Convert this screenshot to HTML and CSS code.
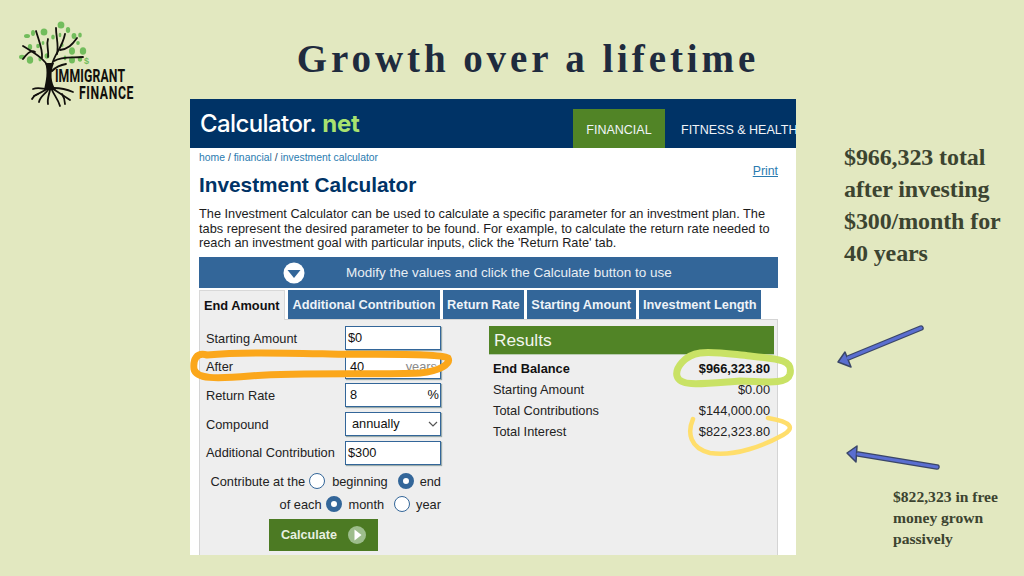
FILE: index.html
```html
<!DOCTYPE html>
<html lang="en">
<head>
<meta charset="utf-8">
<title>Growth over a lifetime</title>
<link rel="stylesheet" href="styles.css">
</head>
<body>
<div class="slide">
  <div class="logo">
    <svg class="tree" width="80" height="90" viewBox="0 0 80 90">
      <g class="leaves">
        <ellipse cx="43" cy="4" rx="3.4" ry="3.6"/><ellipse cx="26" cy="11" rx="3.4" ry="3.6"/><ellipse cx="50" cy="9" rx="2.2" ry="3"/>
        <ellipse cx="9" cy="15" rx="3" ry="2"/><ellipse cx="15" cy="12" rx="2" ry="3"/><ellipse cx="56" cy="15" rx="2.4" ry="3"/>
        <ellipse cx="62" cy="14" rx="1.8" ry="2.6"/><ellipse cx="12" cy="26" rx="2.2" ry="3"/><ellipse cx="65" cy="30" rx="3.2" ry="3.8"/>
        <ellipse cx="54" cy="30" rx="3" ry="3.8"/><ellipse cx="12" cy="39" rx="3.2" ry="3.8"/><ellipse cx="4" cy="36" rx="3" ry="2.2"/>
        <ellipse cx="54" cy="39" rx="3" ry="3.6"/><ellipse cx="62" cy="38" rx="2.2" ry="2.8"/><ellipse cx="29" cy="35" rx="2.4" ry="2.8"/>
        <ellipse cx="20" cy="25" rx="1.8" ry="2.2"/><ellipse cx="25" cy="22" rx="1.4" ry="2"/><ellipse cx="35" cy="16" rx="1.8" ry="2.6"/>
        <ellipse cx="42" cy="14" rx="1.4" ry="2.2"/><ellipse cx="60" cy="22" rx="1.8" ry="2"/><ellipse cx="47" cy="37" rx="1.4" ry="2.4"/>
        <ellipse cx="22" cy="38" rx="1.6" ry="2.4"/><ellipse cx="44" cy="24" rx="1.6" ry="2"/>
      </g>
      <g class="branches">
        <path d="M30 46 C27 38 16 32 5 25"/>
        <path d="M24 37 C25 29 21 20 18 10"/>
        <path d="M34 44 C36 33 44 28 47 13"/>
        <path d="M39 33 C41 24 38 16 38 7"/>
        <path d="M36 40 C44 35 54 37 65 36"/>
        <path d="M42 29 C50 28 54 24 59 17"/>
        <path d="M17 31 C13 28 8 34 5 38"/>
        <path d="M30 36 C31 28 28 24 30 18"/>
        <path d="M34 50 C38 46 42 44 48 43"/>
      </g>
      <path class="trunk" d="M27 42 C30 50 28 60 26 69 L38 69 C33 62 32 52 36 42 Z"/>
      <g class="roots">
        <path d="M30 68 C25 68 20 66 15 68"/>
        <path d="M29 68 C24 71 20 73 16 75"/>
        <path d="M30 69 C26 74 22 76 21 81"/>
        <path d="M32 69 C31 74 29 78 30 83"/>
        <path d="M34 69 C36 74 40 78 42 85"/>
        <path d="M35 68 C40 71 46 75 52 79"/>
        <path d="M36 67 C42 67 48 68 55 71"/>
        <path d="M44 73 C46 76 47 79 47 83"/>
        <path d="M20 73 C17 74 15 76 14 78"/>
      </g>
    </svg>
    <span class="logo-dollar">$</span>
    <div class="logo-name"><span>IMMIGRANT</span><span>FINANCE</span></div>
  </div>

  <h1 class="title">Growth over a lifetime</h1>

  <main class="calc">
    <header class="calc-top">
      <div class="brand"><span>Calculator</span><span class="brand-dot">.</span><span class="brand-net">net</span></div>
      <nav class="nav">
        <a class="nav-item nav-active">FINANCIAL</a>
        <a class="nav-item">FITNESS &amp; HEALTH</a>
      </nav>
    </header>
    <div class="calc-body">
      <div class="crumb-row">
        <div>
          <div class="crumbs"><a>home</a> / <a>financial</a> / <a>investment calculator</a></div>
          <h2 class="calc-title">Investment Calculator</h2>
        </div>
        <a class="print">Print</a>
      </div>
      <p class="intro">The Investment Calculator can be used to calculate a specific parameter for an investment plan. The tabs represent the desired parameter to be found. For example, to calculate the return rate needed to reach an investment goal with particular inputs, click the 'Return Rate' tab.</p>
      <div class="modify">
        <svg class="modify-icon" width="22" height="22" viewBox="0 0 22 22"><circle cx="11" cy="11" r="10.5" fill="#fff"/><path d="M4.5 8 H17.5 L11 16 Z" fill="#336699"/></svg>
        <span>Modify the values and click the Calculate button to use</span>
      </div>
      <div class="tabs">
        <div class="tab tab-on">End Amount</div>
        <div class="tab">Additional Contribution</div>
        <div class="tab">Return Rate</div>
        <div class="tab">Starting Amount</div>
        <div class="tab">Investment Length</div>
      </div>
      <div class="panel">
        <div class="form">
          <div class="field"><label>Starting Amount</label><div class="input">$0</div></div>
          <div class="field"><label>After</label><div class="input input-split"><span>40</span><span class="unit">years</span></div></div>
          <div class="field"><label>Return Rate</label><div class="input input-split"><span>8</span><span>%</span></div></div>
          <div class="field"><label>Compound</label><div class="input input-split"><span>annually</span>
            <svg width="10" height="6" viewBox="0 0 10 6"><path d="M1 1 L5 5 L9 1" fill="none" stroke="#555" stroke-width="1.2"/></svg></div></div>
          <div class="field"><label>Additional Contribution</label><div class="input">$300</div></div>
          <div class="radios r1"><span>Contribute at the</span><i class="radio"></i><span>beginning</span><i class="radio radio-on gap"></i><span>end</span></div>
          <div class="radios r2"><span>of each</span><i class="radio radio-on"></i><span>month</span><i class="radio gap"></i><span>year</span></div>
          <div class="calc-btn"><span>Calculate</span>
            <svg width="18" height="18" viewBox="0 0 18 18"><circle cx="9" cy="9" r="9" fill="#9dbd8c"/><path d="M6.5 3.5 L13.5 9 L6.5 14.5 Z" fill="#fff"/></svg>
          </div>
        </div>
        <div class="results">
          <div class="results-head">Results</div>
          <div class="row row-strong"><span>End Balance</span><span>$966,323.80</span></div>
          <div class="row"><span>Starting Amount</span><span>$0.00</span></div>
          <div class="row"><span>Total Contributions</span><span>$144,000.00</span></div>
          <div class="row"><span>Total Interest</span><span>$822,323.80</span></div>
        </div>
      </div>
    </div>
  </main>

  <svg class="marks" width="1024" height="576" viewBox="0 0 1024 576" aria-hidden="true">
    <path class="mark-orange" d="M207 355 C196 352 193 360 194 369 C196 379 215 379 250 376 C300 372 380 375 420 373 C440 371 451 364 448 358 C440 353 380 355 330 354 C280 353 240 352 207 355"/>
    <path class="mark-green" d="M700 353 C685 355 675 368 677 376 C680 387 700 384 740 381 C760 381 787 386 790 374 C793 360 780 359 750 356 C730 354 712 351 700 353"/>
    <path class="mark-yellow" d="M693 419 C687 433 690 448 710 453 C735 457 765 445 783 435 C795 428 792 422 768 418"/>
    <g class="arrow">
      <path class="shaft-out" d="M921 328 L848 358"/>
      <path class="head" d="M838 362 L845 352 L851 367 Z"/>
      <path class="shaft" d="M921 328 L848 358"/>
      <path class="shaft-out" d="M937 467 L858 454"/>
      <path class="head" d="M847 453 L857 446 L856 462 Z"/>
      <path class="shaft" d="M937 467 L858 454"/>
    </g>
  </svg>

  <aside class="side">
    <p class="note-big">$966,323 total after investing $300/month for 40 years</p>
    <p class="note-small">$822,323 in free money grown passively</p>
  </aside>
</div>
</body>
</html>
```
FILE: styles.css
```css
* { box-sizing: border-box; }
html, body { margin: 0; padding: 0; }
body { width: 1024px; height: 576px; overflow: hidden; background: #e2e8c0; }

.slide {
  position: relative;
  width: 1024px;
  height: 576px;
  display: grid;
  grid-template-columns: 190px 606px 228px;
  grid-template-rows: 99px 456px;
  font-family: "Liberation Sans", Arial, sans-serif;
}

/* logo */
.logo { grid-column: 1; grid-row: 1; position: relative; }
.tree { position: absolute; left: 18px; top: 21px; }
.leaves ellipse { fill: #72bd5c; }
.branches path, .roots path { fill: none; stroke: #12100c; stroke-width: 1.8; stroke-linecap: round; }
.trunk { fill: #12100c; }
.logo-dollar { position: absolute; left: 84px; top: 57px; font: bold 9px/8px "Liberation Sans", sans-serif; color: #72bd5c; }
.logo-name {
  position: absolute; right: 56px; top: 68px; width: 110px;
  display: flex; flex-direction: column; align-items: flex-end;
  font: bold 18px/16.5px "Roboto", sans-serif; color: #12100c;
  transform: scaleX(.68); transform-origin: right top; white-space: nowrap;
}
.logo-name span:first-child { margin-right: 13px; letter-spacing: .2px; }
.logo-name span:last-child { letter-spacing: .9px; }

/* title */
.title {
  grid-column: 2; grid-row: 1;
  margin: 36px 0 0;
  padding-left: 70px;
  text-align: center;
  font: 700 39px/46px "Liberation Serif", serif;
  letter-spacing: 3.9px;
  color: #1f2b3e;
  white-space: nowrap;
}

/* calculator */
.calc { grid-column: 2; grid-row: 2; background: #fff; overflow: hidden; display: flex; flex-direction: column; }
.calc-top { height: 49px; background: #003366; display: flex; justify-content: space-between; flex: none; }
.brand { margin: 7px 0 0 10px; font: 500 24px/36px "Inter", sans-serif; letter-spacing: -.6px; color: #fff; white-space: nowrap; }
.brand-dot { color: #fff; margin-right: 6px; }
.brand-net { color: #a9e26f; font-weight: 700; letter-spacing: -.2px; }
.nav { display: flex; align-items: flex-end; width: 223px; flex: none; }
.nav-item { height: 39px; padding-top: 13px; font-size: 12.5px; line-height: 16px; color: #f0f4f8; white-space: nowrap; }
.nav-active { width: 92px; flex: none; background: #518426; text-align: center; margin-right: 16px; }

.calc-body { padding: 0 18px 0 9px; }
.crumb-row { display: flex; justify-content: space-between; }
.crumbs { margin-top: 4px; font-size: 10.4px; line-height: 12px; color: #2a4a6a; }
.crumbs a { color: #2a7bb0; }
.calc-title { margin: 9px 0 0; font-size: 20.8px; line-height: 24px; font-weight: 700; color: #003366; }
.print { margin-top: 16px; font-size: 12.3px; line-height: 14px; color: #2a7bb0; text-decoration: underline; }
.intro { margin: 10px 0 0; font-size: 12.75px; line-height: 14.7px; color: #1c1c1c; }

.modify {
  margin-top: 6px; height: 31px; background: #336699; color: #e8eef4;
  display: flex; align-items: center; font-size: 13.5px; white-space: nowrap;
}
.modify-icon { margin: 0 41px 0 84px; flex: none; }

.tabs { display: flex; gap: 3px; margin-top: 2px; height: 29px; }
.tab {
  background: #336699; color: #eef3f8; font-size: 12.8px; font-weight: 700;
  line-height: 30px; padding: 0 4.4px; white-space: nowrap;
}
.tab-on { background: #eeeeee; color: #111; width: 86px; height: 30px; position: relative; z-index: 1; border: 1px solid #d8d8d8; border-bottom: 0; padding: 0 4px; line-height: 29px; }

.panel {
  height: 240px; background: #eeeeee; border: 1px solid #d4d4d4;
  display: flex;
}
.form { width: 289px; padding: 6px 0 0 6px; flex: none; }
.field { display: flex; align-items: center; height: 24px; margin-bottom: 4.7px; font-size: 12.8px; color: #222; }
.field label { width: 139px; flex: none; white-space: nowrap; }
.input {
  width: 96px; height: 24px; background: #fff; border: 1px solid #336699; box-shadow: 1px 1px 1px #9aa;
  padding: 0 2px; font-size: 12.8px; line-height: 22px; color: #111;
}
.input-split { display: flex; justify-content: space-between; align-items: center; padding: 0 1px 0 4px; }
.field:nth-child(4) .input-split { padding: 0 2px 0 6px; }
.unit { color: #8a8a8a; padding-right: 2px; }

.radios { display: flex; justify-content: flex-end; align-items: center; width: 235px; height: 23px; font-size: 12.8px; color: #222; white-space: nowrap; }
.r1 { margin-top: 1px; }
.radio { width: 16px; height: 16px; border-radius: 50%; background: #fff; border: 1.5px solid #336699; margin: 0 7px 0 4px; flex: none; }
.radio.gap { margin-left: 10px; margin-right: 6px; }
.radio-on { border: 5px solid #336699; }
.calc-btn {
  margin: 3px 0 0 63px; width: 109px; height: 32px; background: #4c7a23; color: #e8f0e0;
  display: flex; align-items: center; justify-content: center; gap: 11px; font-size: 12.6px; font-weight: 700;
}

.results { width: 285px; margin-top: 6px; flex: none; }
.results-head { height: 29px; background: #518426; color: #f2f6ee; font-size: 17.3px; line-height: 29px; padding-left: 5px; border-bottom: 1px solid #b8ccb0; }
.row { display: flex; justify-content: space-between; height: 21px; line-height: 21px; padding: 0 4px; font-size: 12.8px; color: #222; }
.row-strong { font-weight: 700; color: #111; margin-top: 3px; }

/* hand drawn marks */
.marks { position: absolute; left: 0; top: 0; pointer-events: none; }
.marks path { fill: none; stroke-linecap: round; stroke-linejoin: round; }
.mark-orange { stroke: #fba71b; stroke-width: 7; }
.mark-green { stroke: #c9e265; stroke-width: 7; }
.mark-yellow { stroke: #ffde6b; stroke-width: 4.5; }
.arrow .shaft-out { stroke: #3a4668; stroke-width: 5.5; }
.arrow .shaft { stroke: #5a6ed0; stroke-width: 3; }
.arrow .head { fill: #5a6ed0; stroke: #3a4668; stroke-width: 1.5; }

/* side */
.side { position: absolute; left: 844px; top: 141px; width: 178px; }
.note-big, .note-small { margin: 0; font-family: "Liberation Serif", serif; font-weight: 700; color: #3c4430; }
.note-big { font-size: 24px; line-height: 32px; letter-spacing: -.1px; }
.note-small { margin: 217px 0 0 49px; width: 112px; font-size: 15.6px; line-height: 21px; }
```
